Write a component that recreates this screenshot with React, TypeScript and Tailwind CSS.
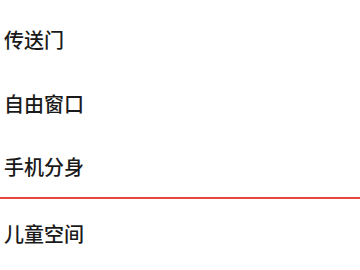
export default function App() {
  const items = ["传送门", "自由窗口", "手机分身"];
  return (
    <div
      className="w-[360px] h-[270px] bg-white overflow-hidden pt-[8px]"
      style={{ fontFamily: '"Noto Sans CJK SC", "Noto Sans", sans-serif' }}
    >
      {items.map((t, i) => (
        <div
          key={t}
          className={
            "flex items-center pl-[4px] text-[20px] font-medium text-[#1a1a1a] " +
            (i === 2 ? "h-[63px] border-b-2 border-[#e8453c]" : "h-[64px]")
          }
        >
          {t}
        </div>
      ))}
      <div className="h-[70px] flex items-center pl-[4px] text-[20px] font-medium text-[#1a1a1a]">
        儿童空间
      </div>
    </div>
  );
}
